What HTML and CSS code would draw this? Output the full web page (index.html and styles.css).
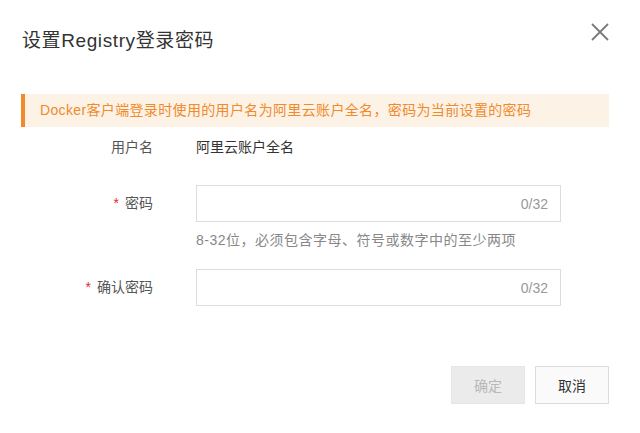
FILE: index.html
```html
<!DOCTYPE html>
<html lang="zh-CN">
<head>
    <meta charset="UTF-8">
    <meta name="viewport" content="width=device-width, initial-scale=1.0">
    <title>设置Registry登录密码</title>
    <link rel="stylesheet" href="styles.css">
</head>
<body>
    <div class="dialog">
        <!-- Header -->
        <div class="dialog-header">
            <div class="dialog-title">设置Registry登录密码</div>
            <button class="close-button" aria-label="关闭">
                <svg width="18" height="18" viewBox="0 0 18 18">
                    <path d="M1 1 L17 17 M17 1 L1 17" stroke="#7a7a7a" stroke-width="1.8" fill="none"/>
                </svg>
            </button>
        </div>

        <!-- Notice -->
        <div class="notice">Docker客户端登录时使用的用户名为阿里云账户全名，密码为当前设置的密码</div>

        <!-- Form -->
        <div class="form">
            <div class="form-row">
                <div class="form-label">用户名</div>
                <div class="form-value">阿里云账户全名</div>
            </div>
            <div class="form-row input-row">
                <div class="form-label"><span class="required">*</span>密码</div>
                <div class="form-field">
                    <div class="input-box">
                        <input type="password" class="input">
                        <span class="counter">0/32</span>
                    </div>
                    <div class="help">8-32位，必须包含字母、符号或数字中的至少两项</div>
                </div>
            </div>
            <div class="form-row input-row second">
                <div class="form-label"><span class="required">*</span>确认密码</div>
                <div class="form-field">
                    <div class="input-box">
                        <input type="password" class="input">
                        <span class="counter">0/32</span>
                    </div>
                </div>
            </div>
        </div>

        <!-- Footer -->
        <div class="dialog-footer">
            <button class="button disabled" disabled>确定</button>
            <button class="button">取消</button>
        </div>
    </div>
</body>
</html>
```

FILE: styles.css
```css
body {
    margin: 0;
    background-color: #fff;
    font-family: "Liberation Sans", "Noto Sans CJK SC", sans-serif;
    font-size: 14px;
    color: #333;
}
.dialog {
    width: 640px;
    height: 433px;
    box-sizing: border-box;
    padding: 29px 31px 0 21px;
}
.dialog-header {
    display: flex;
    justify-content: space-between;
    align-items: flex-start;
    height: 65px;
}
.dialog-title {
    font-size: 19px;
    line-height: 24px;
    letter-spacing: 0.6px;
    color: #333;
    padding-left: 1px;
}
.close-button {
    border: none;
    background: none;
    padding: 0;
    margin-top: -6px;
    margin-right: 0;
    cursor: pointer;
    width: 18px;
    height: 18px;
}
.notice {
    height: 33px;
    line-height: 33px;
    background-color: #fdf2e6;
    border-left: 4px solid #f08a2a;
    padding-left: 15px;
    color: #f08a2c;
    font-size: 14px;
    letter-spacing: 0.35px;
}
.form {
    margin-top: 10px;
}
.form-row {
    display: grid;
    grid-template-columns: 132px 365px;
    column-gap: 43px;
    align-items: start;
    line-height: 20px;
}
.form-label {
    text-align: right;
    color: #555;
}
.form-value {
    color: #333;
}
.input-row {
    margin-top: 28px;
}
.input-row .form-label {
    line-height: 37px;
}
.input-row.second {
    margin-top: 19px;
}
.required {
    color: #e8262b;
    margin-right: 6px;
}
.input-box {
    display: flex;
    align-items: center;
    height: 37px;
    box-sizing: border-box;
    border: 1px solid #dcdcdc;
    padding: 0 12px 0 10px;
}
.input {
    flex: 1;
    border: none;
    outline: none;
    background: none;
    font-size: 14px;
    height: 100%;
    padding: 0;
}
.counter {
    color: #999;
    font-size: 14px;
}
.help {
    margin-top: 8px;
    line-height: 20px;
    color: #888;
    letter-spacing: 0.5px;
}
.dialog-footer {
    display: flex;
    justify-content: flex-end;
    gap: 10px;
    margin-top: 60px;
}
.button {
    width: 74px;
    height: 38px;
    border: 1px solid #dcdcdc;
    background-color: #fafafa;
    color: #333;
    font-size: 14px;
    font-family: inherit;
    cursor: pointer;
    padding: 0;
}
.button.disabled {
    background-color: #ebebeb;
    border-color: #e6e6e6;
    color: #b8b8b8;
    cursor: not-allowed;
}
```
